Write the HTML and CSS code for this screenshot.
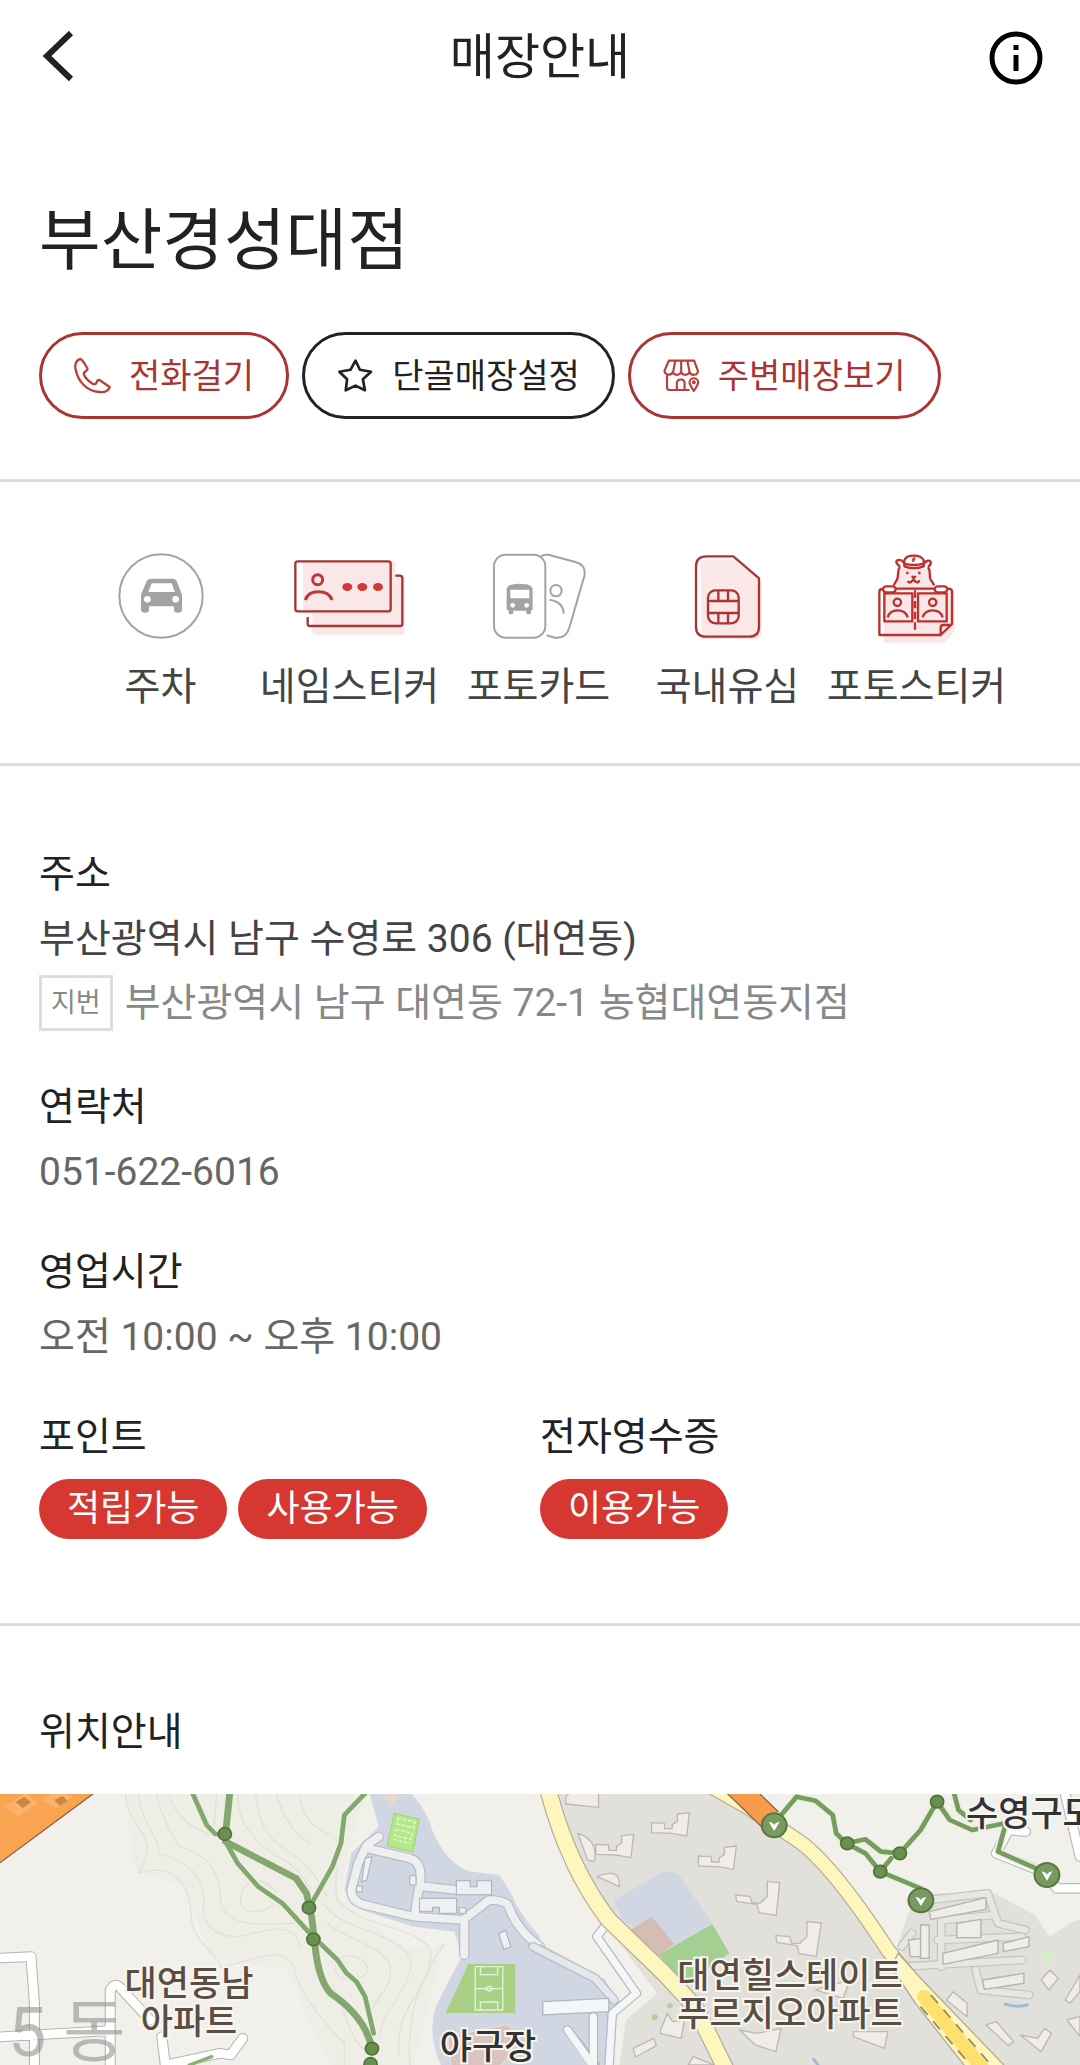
FILE: index.html
```html
<!DOCTYPE html>
<html lang="ko">
<head>
<meta charset="utf-8">
<meta name="viewport" content="width=device-width, initial-scale=1">
<title>매장안내</title>
<link rel="stylesheet" href="styles.css">
</head>
<body>
<header class="topbar">
  <button class="icon-button" type="button" aria-label="뒤로">
    <svg width="40" height="54" viewBox="0 0 40 54" fill="none" stroke="#222" stroke-width="6"><path d="M34 2 10 25 34 48"/></svg>
  </button>
  <p class="topbar-title">매장안내</p>
  <button class="icon-button" type="button" aria-label="정보">
    <svg width="54" height="54" viewBox="0 0 54 54" fill="none" stroke="#000" stroke-width="5"><circle cx="27" cy="27" r="24"/><path d="M27 14v5M27 24v16"/></svg>
  </button>
</header>

<main>
  <section class="store">
    <h1 class="store-name">부산경성대점</h1>
    <div class="actions">
      <button class="pill-button" type="button">
        <svg class="action-icon" viewBox="138 113 112 110" fill="none" stroke="#b8403c" stroke-width="7" stroke-linejoin="round"><path d="M158 118C146 120 139 133 143 150c7 36 34 66 72 68 14 1 27-2 31-15L214 181c-5 0-7 4-9 11-3 4-8 2-12 0-10-6-20-15-25-27-3-6 3-8 7-11 5-3 5-6 1-12-5-9-11-20-18-24Z"/></svg>
        전화걸기
      </button>
      <button class="pill-button pill-button-dark" type="button">
        <svg class="action-icon" viewBox="918 113 110 110" fill="none" stroke="#222" stroke-width="8" stroke-linejoin="round"><path d="m973 124 13 27 33 6-24 22 6 33-28-14-29 14 4-33-23-22 33-6Z"/></svg>
        단골매장설정
      </button>
      <button class="pill-button" type="button">
        <svg class="action-icon" viewBox="477 111 120 112" fill="none" stroke="#b8403c" stroke-width="7" stroke-linejoin="round"><path d="M496 119h82l12 32c1 17-22 18-27 4-4 13-24 13-27 0-4 13-24 13-27 0-4 14-27 12-27-4ZM517 119l-7 36M536 119v36M556 119l7 36M490 167v38q0 9 9 9h64M522 214v-22q0-12 13-12 12 0 12 12v22M577 217q-14-20-14-28a14 13 0 0 1 28 0q0 8-14 28Z"/><circle cx="577" cy="189" r="3"/></svg>
        주변매장보기
      </button>
    </div>
  </section>

  <ul class="services">
    <li class="service">
      <svg width="86" height="86" viewBox="53 40 258 258"><circle cx="182" cy="169" r="125" fill="none" stroke="#a3a3a3" stroke-width="6"/><path fill="#a3a3a3" fill-rule="evenodd" d="M122 165 138 126q4-9 14-9h64q10 0 14 9l15 39v46q0 8-12 8t-12-8v-11h-75v11q0 8-12 8t-12-8ZM154 131l-10 26h80l-10-26Z"/><circle cx="141" cy="179" r="10" fill="#fff"/><circle cx="226" cy="179" r="10" fill="#fff"/></svg>
      주차
    </li>
    <li class="service">
      <svg width="114" height="86" viewBox="582 40 342 258"><path fill="#fae7e7" d="M612 66h277v40h28v171q0 8-8 8H648q-8 0-8-8v-56h-28Z"/><g fill="none" stroke="#a83532" stroke-width="7"><rect x="589" y="65" width="286" height="150" rx="7"/><path d="M889 108h13q8 0 8 8v136q0 7-8 7H634q-8 0-8-7v-20"/></g><g fill="none" stroke="#bd3835" stroke-width="9"><circle cx="656" cy="120" r="15"/><path d="M619 181c5-16 19-25 39-25 21 0 36 9 41 25"/></g><g fill="#d33835"><ellipse cx="745" cy="142" rx="15" ry="12"/><ellipse cx="790" cy="142" rx="15" ry="12"/><ellipse cx="837" cy="142" rx="15" ry="12"/></g></svg>
      네임스티커
    </li>
    <li class="service">
      <svg width="94" height="86" viewBox="125 40 282 258" fill="none" stroke="#a3a3a3" stroke-width="6"><rect x="131" y="45" width="154" height="249" rx="35"/><path d="M272 50q10-7 25-4l78 21q34 9 27 42l-45 155q-10 34-44 30l-24-7"/><circle cx="317" cy="153" r="17"/><path d="M297 180q42 6 43 42"/><path fill="#a3a3a3" stroke="none" fill-rule="evenodd" d="M169 150q0-18 39-18t39 18v61h-5v8q0 5-7 5t-7-5v-6h-39v6q0 5-7 5t-7-5v-8h-6ZM180 150v26h57v-26Z"/><circle cx="187" cy="197" r="7" fill="#fff" stroke="none"/><circle cx="229" cy="197" r="7" fill="#fff" stroke="none"/></svg>
      포토카드
    </li>
    <li class="service">
      <svg width="68" height="86" viewBox="731 40 204 258"><path fill="#fae7e7" d="M750 60h100l84 68v150q0 20-20 20H755Z"/><g fill="none" stroke="#ac3532" stroke-width="7"><path d="M769 50h80l77 66v145q0 30-30 30H767q-30 0-30-30V80q0-30 32-30Z"/><rect x="773" y="152" width="92" height="99" rx="22"/><path d="M773 184h92M773 220h92M804 152v32M833 152v32M804 220v31M833 220v31"/></g></svg>
      국내유심
    </li>
    <li class="service">
      <svg width="80" height="90" viewBox="234 42 240 270"><path fill="#fae7e7" d="M255 158h212v118l-30 35H255ZM300 90h95l12 65H285Z"/><g fill="none" stroke="#bd302e" stroke-width="7" stroke-linejoin="round"><path d="M303 82c-10-6-14-15-8-18 9-3 17 1 20 9M376 73c5-8 16-11 19-5 1 7-1 12-8 16M303 82c-10 15-3 29-9 40-7 9-7 13-10 17M387 84c10 14 2 28 8 39 7 7 8 11 10 16" /><path d="M316 82V64q5-14 28-14t30 14v18q-29 11-58 0ZM316 74q28 8 58 0M341 59h8M343 59v9"/><path d="M325 98v8M361 98v8M338 112l6 4 7-4M326 126q4 7 10 3l7-7 8 7q8 3 10-5" /><path d="M250 150q-9 0-9 8v130h184l34-33v-97q0-9-13-9M289 149h118M425 288v-22q0-8 8-8h26M256 163h84v84h-84ZM357 163h86v84h-86Z"/><rect x="252" y="142" width="38" height="18" rx="9" fill="#fff"/><rect x="407" y="142" width="38" height="18" rx="9" fill="#fff"/><path d="M348 154v128" stroke-dasharray="22 10"/><circle cx="295" cy="190" r="11"/><path d="M266 235q6-21 30-21t30 21M371 235q6-21 30-21t30 21"/><circle cx="401" cy="190" r="11"/></g></svg>
      포토스티커
    </li>
  </ul>

  <section class="details">
    <div class="field">
      <h2 class="label">주소</h2>
      <p class="value value-strong">부산광역시 남구 수영로 306 (대연동)</p>
      <p class="value lot"><span class="lot-tag">지번</span>부산광역시 남구 대연동 72-1 농협대연동지점</p>
    </div>
    <div class="field">
      <h2 class="label">연락처</h2>
      <p class="value">051-622-6016</p>
    </div>
    <div class="field">
      <h2 class="label">영업시간</h2>
      <p class="value">오전 10:00 ~ 오후 10:00</p>
    </div>
    <div class="field-pair">
      <div class="field">
        <h2 class="label">포인트</h2>
        <div class="badges"><span class="badge">적립가능</span><span class="badge">사용가능</span></div>
      </div>
      <div class="field">
        <h2 class="label">전자영수증</h2>
        <div class="badges"><span class="badge">이용가능</span></div>
      </div>
    </div>
  </section>

  <section class="location">
    <h2 class="label location-title">위치안내</h2>
    <svg class="map" viewBox="0 0 1080 271" role="img" aria-label="매장 위치 지도">
      <defs>
        <g id="apt"><path d="M0 28 37 30 38 46H60V34L75 24V2L110-2 102 68 58 60 0 58Z"/></g>
        <g id="gate"><circle r="36" fill="#789a5e" stroke="#55793f" stroke-width="6"/><path d="M-16-11q16 3 16 12 0-9 16-12L0 17Z" fill="#fff"/></g>
      </defs>
      <rect width="1080" height="271" fill="#f2f0ea"/>

      <!-- west side -->
      <g transform="translate(0 -4) scale(.3444 .3333)" stroke-linejoin="round" stroke-linecap="round">
        <path fill="#ecece6" d="M360 0H1060L980 330 1190 480 1290 460 1200 825H960L830 540 610 500 540 290 390 240Z" opacity=".7"/>
        <g fill="none" stroke="#e1e1da" stroke-width="4">
          <path d="M365 0C360 120 480 130 400 250 490 220 550 260 555 380 560 460 640 500 640 530 730 520 840 440 860 560 880 620 940 700 1000 760V825"/>
          <path d="M400 0C410 110 470 150 460 190 560 220 600 270 590 350 590 420 640 440 690 440 780 420 860 390 870 470"/>
          <path d="M450 0C470 80 500 140 520 170 620 200 640 260 640 330 650 400 730 410 830 400L880 400"/>
          <path d="M485 0C510 90 570 130 650 140M630 0 620 130M690 0C690 70 700 120 790 190 850 220 880 250 900 300"/>
          <path d="M740 0C750 90 770 140 830 180 900 220 930 280 950 320"/>
          <path d="M800 0C820 80 850 130 900 160M870 0C870 60 900 110 950 130 1010 130 960 260 980 330 1060 420 1200 400 1250 480 1260 600 1140 640 1160 800"/>
          <path d="M940 340C980 420 1140 420 1190 500 1210 580 1120 640 1100 740M950 400C990 440 1100 460 1130 520 1150 590 1090 620 1080 660"/>
          <path d="M740 270C800 280 830 330 770 360 690 380 690 330 710 290ZM980 510C1030 470 1100 540 1050 560 1000 580 960 560 980 510Z"/>
          <path d="M1290 460C1230 560 1180 640 1190 825M960 590C1000 610 1000 740 1060 780"/>
        </g>
        <path fill="#f8a451" stroke="#80654e" stroke-width="4" d="M-10-60V226L280 4Z"/>
        <path fill="#fab36c" d="M10 50 75 10 110 40 55 80ZM120 30 165 0 210 20 165 55Z"/><path fill="#cf8442" d="m45 36 25-16 20 16-24 18ZM157 30l25-12 14 15-22 14Z"/>

        <path fill="#d0d7e2" d="M1070 0H1185Q1240 60 1255 120 1300 230 1370 245L1450 255Q1480 300 1500 345 1530 400 1568 440V825H1280Q1240 730 1265 650L1340 500 1320 425 1200 410 1050 360 1000 300 1020 190 1100 110Z"/>
        <path fill="#e8d8cc" d="m1100 5 40 40 20-30-8-15Z"/>
        <path fill="#b5e78b" stroke="#9dd476" stroke-width="3" d="m1145 70 72 18-18 98-75-18Z"/>
        <g fill="none" stroke="#e6f8d9" stroke-width="4" stroke-dasharray="8 8"><path d="m1155 84 50 12-4 18-48-12ZM1150 118l47 12-4 18-47-12ZM1142 148l48 12"/></g>
        <g fill="none"><path stroke="#b7bdc8" stroke-width="30" d="M1100 140 1065 165 1040 220 1020 300Q1020 335 1060 345L1200 380 1345 390 1420 330Q1460 330 1475 345 1500 420 1568 470M1065 175 1190 205Q1235 220 1215 300L1205 370M1230 290 1330 300M1348 395V495"/><path stroke="#eeefee" stroke-width="23" d="M1100 140 1065 165 1040 220 1020 300Q1020 335 1060 345L1200 380 1345 390 1420 330Q1460 330 1475 345 1500 420 1568 470M1065 175 1190 205Q1235 220 1215 300L1205 370M1230 290 1330 300M1348 395V495"/></g>
        <g fill="#eff0f3" stroke="#a9aeb8" stroke-width="3"><path d="M1325 272h40v18h20v-18h42v42h-102ZM1218 325h108v45h-50v-18h-20v12h-38ZM1060 205l20-5-15 70-15 5ZM1448 432l20-12 15 50-20 8ZM1190 257h18v28h-18ZM1035 288h17v18h-17ZM1333 353h20v17h-20Z"/></g>
        <path fill="#a9d186" d="M1360 522h136v147h-202Z"/><path fill="none" stroke="#e2f2d5" stroke-width="4" d="M1380 530h80v130h-80ZM1380 596h80M1395 530v24h50v-24M1395 660v-24h50v24M1408 596q12-14 24 0-12 14-24 0"/>
        <path fill="#d9c4bf" stroke="#e9dcd6" stroke-width="4" d="m1300 740 160-35q20-5 25 18l-5 60q-8 50-60 50h-110Z"/>

        <g fill="none" stroke="#b4b4b0" stroke-width="32"><path d="M-20 505 90 500 100 640V845M-20 742 320 722M320 845V600Q335 570 355 600L435 690M470 740 480 825 640 790 670 795 705 745"/></g>
        <g fill="none" stroke="#fff" stroke-width="26"><path d="M-20 505 90 500 100 640V845M-20 742 320 722M320 845V600Q335 570 355 600L435 690M470 740 480 825 640 790 670 795 705 745"/></g>
        <path fill="none" stroke="#86b56f" stroke-width="10" d="M550 825 615 800"/>

        <g fill="none" stroke="#e9f3df" stroke-width="26"><path d="M555 10 600 105 625 132H653L668 70V0M655 155 860 265 890 310 905 380 915 470Q925 570 960 610 1060 680 1080 775M655 155 690 220 750 290 820 340 895 425M1060 10 1000 75 990 160 965 230 905 340M930 460 980 510 1005 548 1035 575 1060 620 1085 730"/></g>
        <g fill="none" stroke="#85a670" stroke-width="14"><path d="M555 0 600 105 625 132H653M655 155 690 220 750 290 820 340 895 425M1060 10 1000 75 990 160 965 230 905 340M930 460 980 510 1005 548 1035 575 1060 620 1085 730"/><path stroke-width="20" d="M668 0 655 132M655 155 860 265 890 310 905 380 915 470Q925 570 960 610 1060 680 1080 775"/></g>
        <g fill="#6b8f4e" stroke="#4f743a" stroke-width="5"><circle cx="653" cy="132" r="19"/><circle cx="897" cy="353" r="19"/><circle cx="910" cy="448" r="19"/><circle cx="1080" cy="776" r="19"/><circle cx="1076" cy="822" r="19"/></g>
      </g>

      <!-- east side -->
      <g transform="translate(540 -4) scale(.3444 .3333)" stroke-linejoin="round" stroke-linecap="round">
        <path fill="#e2e0da" d="M50 0H490L640 100 790 190 920 340 1050 520 1130 560 1400 825H230L250 690 340 610 180 390 90 170ZM1040 460 1080 340 1130 310H1320L1480 400 1568 390V825H1200Z"/>
        <path fill="#f2f0ea" d="m1440 380 40 60 88-60v-60h-100Z"/>
        <path fill="#d0d7e2" d="M0 460 190 570 220 640 205 825H0ZM215 330 350 250q40-15 60 15l90 135-120 75-140-85Z"/>
        <path fill="#d4bdb3" d="m265 418 60-38 65 82-50 38Z"/><path fill="#a4cf93" d="M345 495 500 402 550 490 440 570 400 560Z"/>
        <g fill="#f0ede7" stroke="#bdb9b5" stroke-width="4">
          <use href="#apt" x="324" y="70"/><use href="#apt" x="162" y="135"/><use href="#apt" x="460" y="170"/><path d="m75 20 20-20h75v52L75 42ZM110 130q60 20 48 85l-20-5ZM165 260q70-30 65 30l-30-15ZM568 315l42 4 6 20h24l20-20v-45l36 4-10 98-50-8-5-24-60-10ZM685 436l40 4 6 20h24l20-20v-45l42 4-15 100-50-8-5-24-60-10ZM270 775l60-30 8 22-60 34ZM350 720l20-50 15 25 35-5-10 55-60-15ZM580 720l50 10 70-15-15 70-60-20ZM910 725h100l-10 50-90-35ZM430 825l15-25 60 25ZM1180 630l20-25 40 35v40ZM1295 705l30-10 50 60-15 12ZM1395 735l50 10 20-30 20 15-30 55ZM1455 570l25-30 25 25-27 35ZM1525 630l43-75v50l-30 35ZM1530 690l38-10v60ZM800 600l100-30-20 55Z"/>
        </g>
        <g fill="none" stroke="#b5b9bd" stroke-width="28"><path d="M195 400 165 440 280 610 210 670 200 835M-20 470 160 565 215 630M155 680V825M80 720 160 825"/></g>
        <g fill="none" stroke="#f4f6f7" stroke-width="21"><path d="M195 400 165 440 280 610 210 670 200 835M155 680V835M80 720 160 835"/><path stroke="#e3e8ed" d="M-20 470 160 565 215 630"/></g>
        <path fill="#f4f6f7" stroke="#b5b9bd" stroke-width="4" d="M8 635 200 625V665L8 675Z"/>
        <g fill="none" stroke="#c3c2bf" stroke-width="26"><path d="M1050 530 1400 510M1130 330 1300 310 1330 400 1410 420M1165 370V530M1170 390 1320 375M1155 450 1400 440M1265 540 1280 600 1420 615M1050 470 1080 430"/></g>
        <g fill="none" stroke="#e8e6e2" stroke-width="19"><path d="M1050 530 1400 510M1130 330 1300 310 1330 400 1410 420M1165 370V530M1170 390 1320 375M1155 450 1400 440M1265 540 1280 600 1420 615M1050 470 1080 430"/></g>
        <g fill="#efede8" stroke="#b4b2af" stroke-width="4"><path d="m1130 365 165-42v35l-160 30ZM1105 405h25v100h-25ZM1170 490l160-40v40l-160 33ZM1345 460l75-20v30l-75 15ZM1285 570l120-20v30l-115 18ZM1210 400l70-12v55h-70ZM1070 450l35-5v55h-30Z"/></g>
        <path fill="none" stroke="#9cbcd8" stroke-width="9" d="M1350 642q30 12 65 3M795 808l12 16"/>
        <path fill="#d5ebca" d="m1475 475 22 25-20 28-22-26Z"/><g fill="#abd39b"><circle cx="333" cy="682" r="9"/><circle cx="377" cy="647" r="8"/></g>

        <g fill="none" stroke="#b3ad99"><path stroke-width="52" d="M20-15Q80 230 200 390L360 550 450 650 545 850"/><path stroke-width="46" d="M480-20 600 50 740 145Q840 210 1010 480L1120 620"/></g>
        <g fill="none" stroke="#fdf7bd"><path stroke-width="45" d="M20-15Q80 230 200 390L360 550 450 650 545 850"/><path stroke-width="39" d="M480-20 600 50 740 145Q840 210 1010 480L1120 620"/></g>
        <path fill="#fdf7bd" stroke="#b3ad99" stroke-width="4" d="M1040 490 1110 570 1370 850H1250L1090 640 1020 530Z"/>
        <path fill="none" stroke="#fde06d" stroke-width="40" d="m1115 620 190 240"/>
        <path fill="none" stroke="#96845d" stroke-width="5" stroke-linecap="butt" stroke-dasharray="32 25" d="m1135 615 195 235M1105 650l165 200"/>
        <path fill="none" stroke="#8e6848" stroke-width="70" stroke-linecap="butt" d="M555-25 670 90"/><path fill="none" stroke="#f79c4b" stroke-width="62" stroke-linecap="butt" d="M555-25 670 90"/>
        <path fill="none" stroke="#bbb" stroke-width="32" d="M1410 125 1360 120 1325 190 1470 250 1500 295H1590M1520-10 1568 200"/><path fill="none" stroke="#fff" stroke-width="25" d="M1410 125 1360 120 1325 190 1470 250 1500 295H1590M1520-10 1568 200"/>
        <g fill="none" stroke="#e9f3df" stroke-width="24"><path d="M680 100 745 20 800 32 850 75 860 130 890 160 945 190 988 245 1105 295M890 160 945 148 990 185 1045 190 1105 120 1153 35 1190 90 1255 120 1350 100M988 245 1020 205M1200 0 1215 60 1250 90M1350 110 1330 185 1450 240"/></g>
        <g fill="none" stroke="#779b60" stroke-width="14"><path d="M680 100 745 20 800 32 850 75 860 130 890 160 945 190 988 245 1105 295M890 160 945 148 990 185 1045 190 1105 120 1153 35 1190 90 1255 120 1350 100M988 245 1020 205M1200 0 1215 60 1250 90M1350 110 1330 185 1450 240"/></g>
        <g fill="#6b8f4e" stroke="#4f743a" stroke-width="5"><circle cx="892" cy="160" r="19"/><circle cx="1045" cy="190" r="19"/><circle cx="988" cy="245" r="19"/><circle cx="1153" cy="35" r="19"/></g>
        <use href="#gate" x="680" y="106"/><use href="#gate" x="1106" y="331"/><use href="#gate" x="1472" y="255"/>
      </g>

      <g class="map-label">
        <text x="189" y="202" text-anchor="middle">대연동남</text>
        <text x="189" y="240" text-anchor="middle">아파트</text>
        <text x="790" y="194" text-anchor="middle">대연힐스테이트</text>
        <text x="790" y="232" text-anchor="middle">푸르지오아파트</text>
        <text class="map-place" x="966" y="32">수영구도</text>
        <text class="map-place" x="488" y="265" text-anchor="middle">야구장</text>
      </g>
      <text class="map-district" x="8" y="262">5 동</text>
    </svg>
  </section>
</main>
</body>
</html>
```
FILE: styles.css
```css
* {
  box-sizing: border-box;
}

body {
  margin: 0;
  background: #fff;
  color: #222;
  font-family: Roboto, "Noto Sans CJK KR", sans-serif;
  font-size: 39px;
  line-height: 64px;
}

h1,
h2,
p,
ul {
  margin: 0;
  padding: 0;
  font-weight: 400;
}

button {
  font: inherit;
  cursor: pointer;
}

.topbar {
  display: grid;
  grid-template-columns: 54px 1fr 54px;
  align-items: center;
  height: 115px;
  padding: 0 37px;
}

.icon-button {
  display: flex;
  padding: 0;
  border: 0;
  background: none;
}

.topbar-title {
  text-align: center;
  font-size: 49px;
}

.store {
  padding: 78px 39px 60px;
  border-bottom: 3px solid #ddd;
}

.store-name {
  font-size: 67px;
  line-height: 96px;
}

.actions {
  display: flex;
  flex-wrap: wrap;
  gap: 13px;
  margin-top: 43px;
}

.pill-button {
  display: flex;
  align-items: center;
  gap: 18px;
  height: 87px;
  padding: 0 32px;
  border: 3px solid #a83532;
  border-radius: 44px;
  background: #fff;
  color: #a83532;
  font-size: 34px;
}

.pill-button-dark {
  border-color: #222;
  color: #222;
}

.action-icon {
  width: 37px;
  height: 37px;
}

.services {
  display: grid;
  grid-template-columns: repeat(5, 1fr);
  padding: 71px 69px 44px 66px;
  border-bottom: 3px solid #ddd;
  color: #444;
  list-style: none;
}

.service {
  display: grid;
  grid-template-rows: 90px 64px;
  gap: 12px;
  justify-items: center;
  align-items: start;
  white-space: nowrap;
}

.details {
  display: flex;
  flex-direction: column;
  gap: 35px;
  padding: 75px 39px 84px;
  border-bottom: 3px solid #ddd;
}

.label {
  color: #222;
  font-size: 39px;
  line-height: 66px;
}

.value {
  color: #666;
}

.value-strong {
  color: #444;
}

.lot {
  display: flex;
  align-items: center;
  gap: 12px;
  margin-bottom: 4px;
  color: #888;
}

.lot-tag {
  padding: 0 9px;
  border: 3px solid #ddd;
  font-size: 27px;
  line-height: 50px;
}

.field-pair {
  display: grid;
  grid-template-columns: 1fr 1fr;
}

.badges {
  display: flex;
  gap: 11px;
  margin-top: 9px;
}

.badge {
  padding: 0 28px;
  border-radius: 30px;
  background: #d63731;
  color: #fff;
  font-size: 36px;
  line-height: 60px;
}

.location {
  padding-top: 73px;
}

.location-title {
  padding: 0 39px;
}

.map {
  display: block;
  width: 100%;
  height: auto;
  margin-top: 29px;
}

.map-label {
  fill: #5a4d42;
  stroke: #f7f5f0;
  stroke-width: 4px;
  paint-order: stroke;
  font-size: 35px;
  font-weight: 500;
}

.map-place {
  fill: #333;
}

.map-district {
  fill: #888;
  fill-opacity: .55;
  font-size: 68px;
}
```
